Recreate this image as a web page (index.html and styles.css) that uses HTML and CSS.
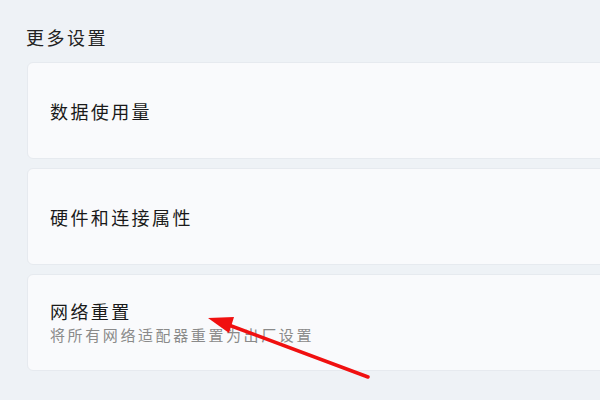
FILE: index.html
```html
<!DOCTYPE html>
<html lang="zh-CN">
<head>
  <meta charset="UTF-8" />
  <title>更多设置</title>
  <link rel="stylesheet" href="styles.css">
</head>
<body>

  <div class="page">
    <h2 class="section-title">更多设置</h2>

    <div class="list">
      <div class="card">
        <div class="card-title">数据使用量</div>
      </div>
      <div class="card">
        <div class="card-title">硬件和连接属性</div>
      </div>
      <div class="card">
        <div class="card-title">网络重置</div>
        <div class="card-desc">将所有网络适配器重置为出厂设置</div>
      </div>
    </div>
  </div>

  <svg class="arrow" width="600" height="400" viewBox="0 0 600 400">
    <line x1="368" y1="377" x2="226" y2="324" stroke="#f01010" stroke-width="3.5" stroke-linecap="round"/>
    <polygon points="208,318 234,317 229,333" fill="#f01010"/>
  </svg>

</body>
</html>
```

FILE: styles.css
```css
body {
  margin: 0;
  font-family: "Noto Sans CJK SC", "Noto Sans", sans-serif;
  background-color: #eef2f6;
  color: #1b1b1b;
  overflow: hidden;
  width: 600px;
  height: 400px;
  position: relative;
}

.page {
  padding: 25px 0 0 27px;
}

.section-title {
  margin: 0 0 13px -1px;
  font-size: 18px;
  font-weight: normal;
  letter-spacing: 2.5px;
  color: #222;
  line-height: 24px;
}

.list {
  display: flex;
  flex-direction: column;
  gap: 9px;
  margin-right: -20px;
}

.card {
  height: 97px;
  background-color: #f9fafc;
  border: 1px solid #e6eaef;
  border-radius: 6px;
  box-sizing: border-box;
  padding: 0 22px;
  display: flex;
  flex-direction: column;
  justify-content: center;
}

.card-title {
  font-size: 18px;
  letter-spacing: 2.4px;
  line-height: 22px;
  color: #1a1a1a;
}

.card-desc {
  font-size: 15px;
  letter-spacing: 2.6px;
  line-height: 20px;
  color: #8a8a8a;
  margin-top: 3px;
}

.arrow {
  position: absolute;
  left: 0;
  top: 0;
}
```
